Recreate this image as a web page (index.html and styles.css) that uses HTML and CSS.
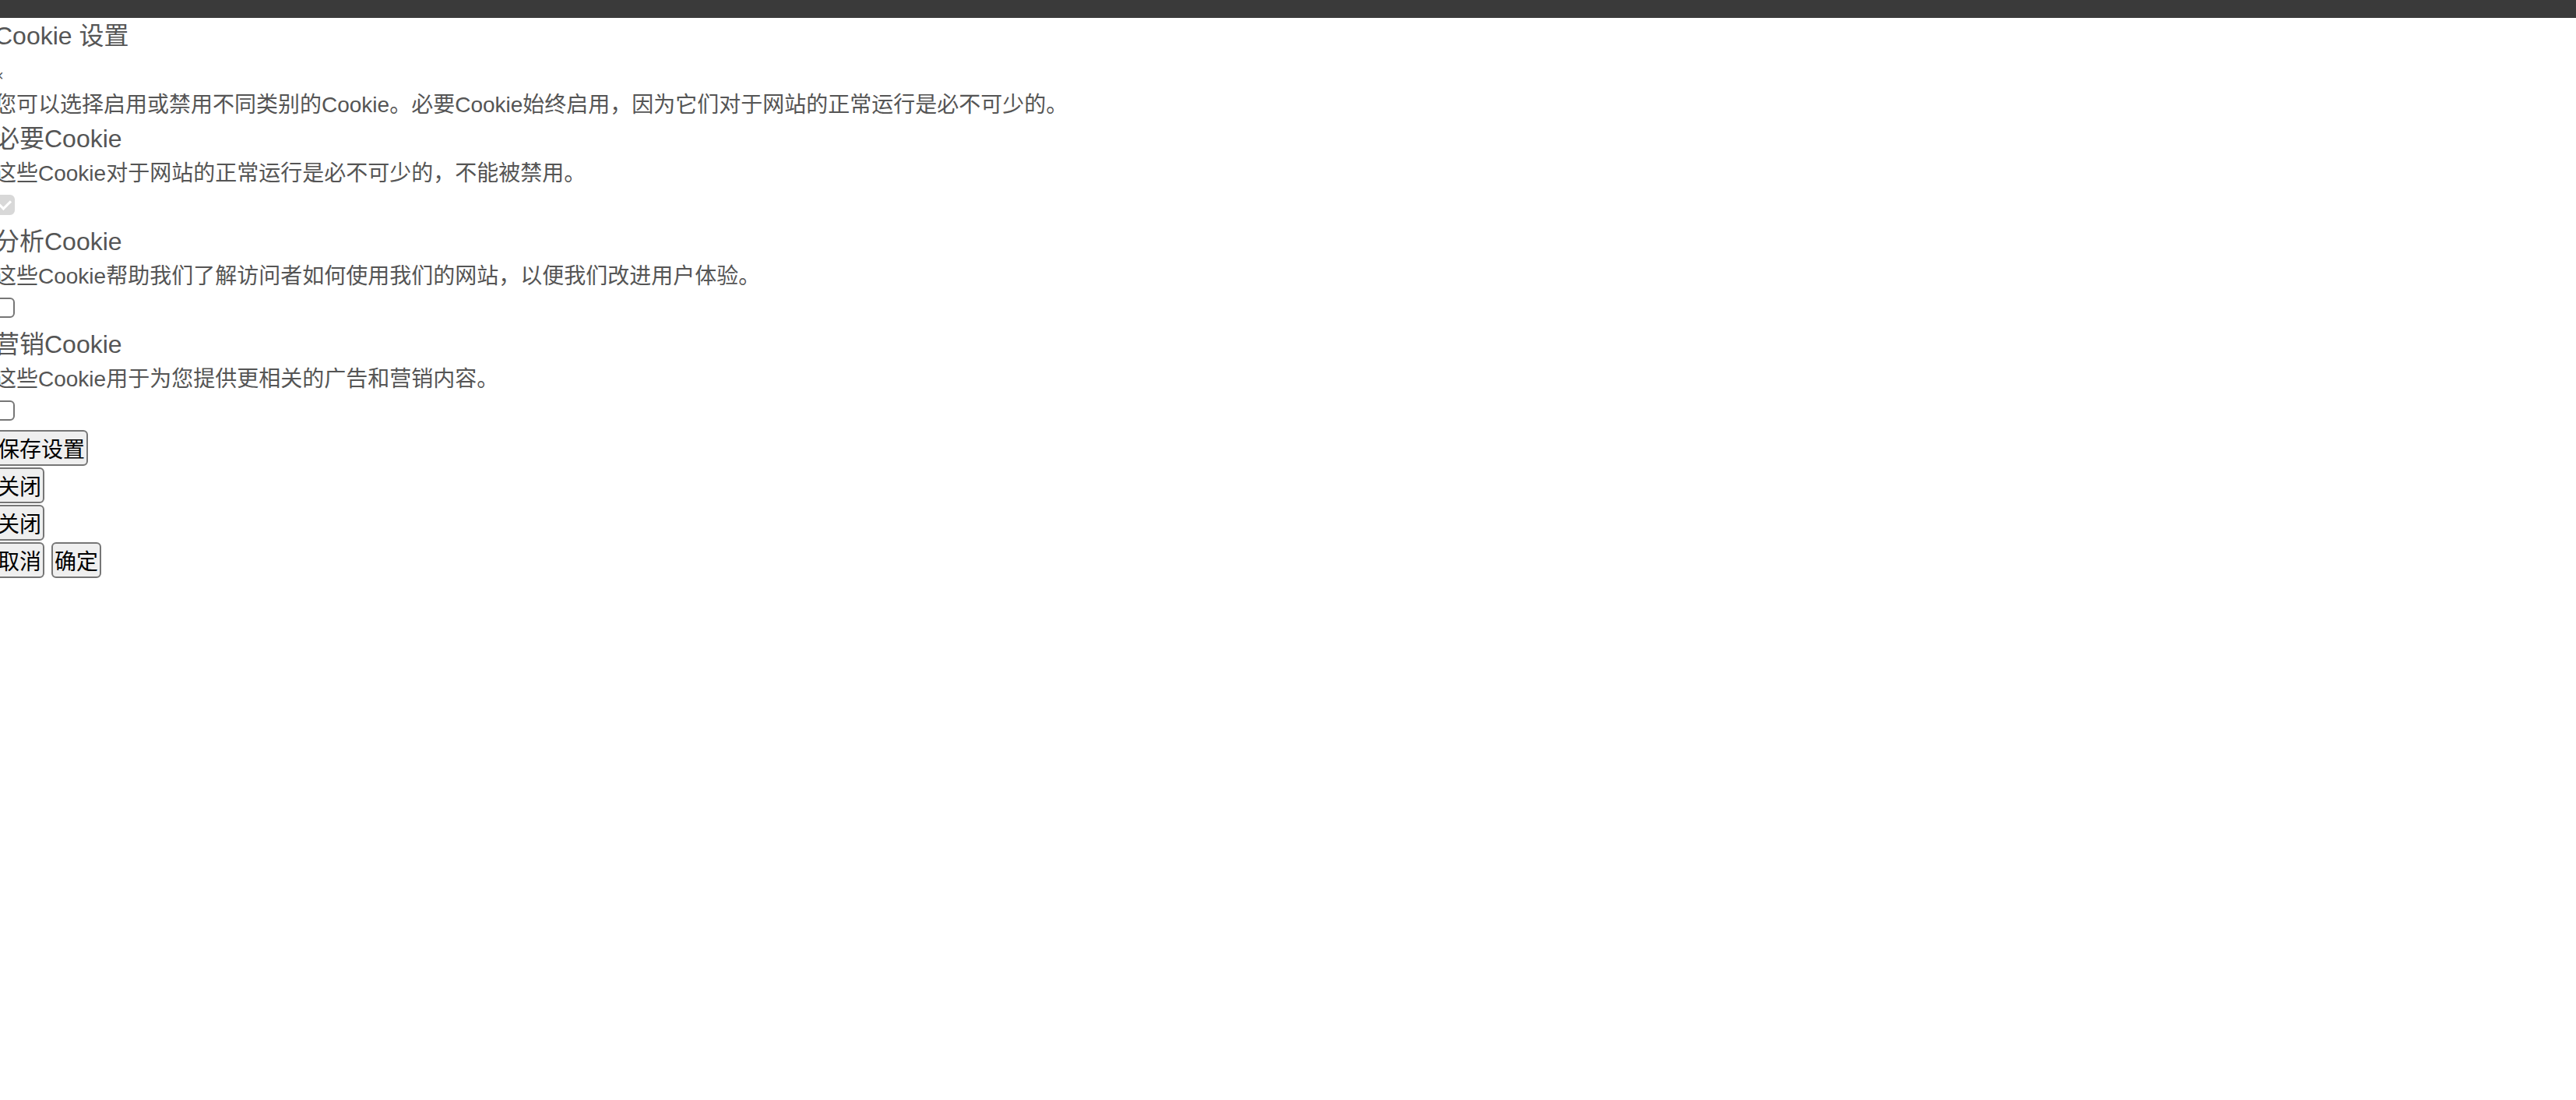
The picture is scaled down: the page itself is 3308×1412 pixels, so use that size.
FILE: index.html
```html
<!DOCTYPE html>
<html lang="zh-CN">
<head>
<meta charset="utf-8">
<title>Cookie 设置</title>
<link rel="stylesheet" href="styles.css">
</head>
<body>
<div class="topbar"></div>
<div class="modal">
  <h2 class="title">Cookie 设置</h2>
  <div class="close-row"><span class="close">×</span></div>
  <p class="intro">您可以选择启用或禁用不同类别的Cookie。必要Cookie始终启用，因为它们对于网站的正常运行是必不可少的。</p>
  <div class="category">
    <h3 class="cat-title">必要Cookie</h3>
    <p class="cat-desc">这些Cookie对于网站的正常运行是必不可少的，不能被禁用。</p>
    <input type="checkbox" class="cb" checked disabled>
  </div>
  <div class="category">
    <h3 class="cat-title">分析Cookie</h3>
    <p class="cat-desc">这些Cookie帮助我们了解访问者如何使用我们的网站，以便我们改进用户体验。</p>
    <input type="checkbox" class="cb">
  </div>
  <div class="category">
    <h3 class="cat-title">营销Cookie</h3>
    <p class="cat-desc">这些Cookie用于为您提供更相关的广告和营销内容。</p>
    <input type="checkbox" class="cb">
  </div>
  <div class="actions">
    <div class="btn-row"><button class="btn">保存设置</button></div>
    <div class="btn-row"><button class="btn">关闭</button></div>
    <div class="btn-row"><button class="btn">关闭</button></div>
    <div class="btn-row"><button class="btn">取消</button><button class="btn">确定</button></div>
  </div>
</div>
</body>
</html>
```
FILE: styles.css
```css
html, body {
  margin: 0;
  padding: 0;
  background: #ffffff;
}
body {
  font-family: "Liberation Sans", "Noto Sans CJK SC", sans-serif;
  color: #555555;
  overflow: hidden;
}
.topbar {
  height: 23px;
  background: #3a3a3a;
}
.modal {
  margin-left: -7px;
}
.title {
  margin: 0;
  font-size: 32px;
  font-weight: 400;
  line-height: 46px;
}
.close-row {
  height: 45px;
  font-size: 20px;
  line-height: 57px;
}
.intro,
.cat-desc {
  margin: 0;
  font-size: 28px;
  line-height: 41px;
}
.cat-title {
  margin: 0;
  font-size: 32px;
  font-weight: 400;
  line-height: 47px;
}
.cb {
  -webkit-appearance: none;
  appearance: none;
  display: block;
  position: relative;
  box-sizing: border-box;
  width: 26px;
  height: 26px;
  margin: 7px 0 11px 0;
  border: 2px solid #767676;
  border-radius: 6px;
  background: #ffffff;
}
.cb:checked:disabled {
  background: #d8d8d8;
  border-color: #d8d8d8;
}
.cb:checked::after {
  content: "";
  position: absolute;
  left: 7px;
  top: 2px;
  width: 6px;
  height: 12px;
  border: solid #ffffff;
  border-width: 0 3px 3px 0;
  transform: rotate(45deg);
}
.actions {
  padding-top: 1px;
}
.btn-row {
  display: flex;
  gap: 9px;
  margin-bottom: 2px;
}
.btn {
  box-sizing: border-box;
  height: 46px;
  margin: 0;
  padding: 0 2px;
  font-family: "Noto Sans CJK SC", sans-serif;
  font-size: 28px;
  line-height: 40px;
  color: #000000;
  background: #efefef;
  border: 2px solid #767676;
  border-radius: 6px;
}
```
